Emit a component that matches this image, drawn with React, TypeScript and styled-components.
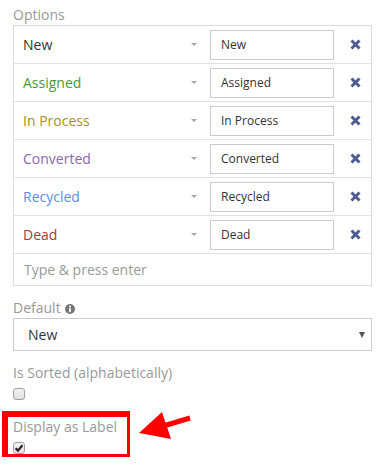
import React from "react";
import styled, { createGlobalStyle } from "styled-components";

const options = [
  { name: "New", color: "#333333" },
  { name: "Assigned", color: "#4a9a3a" },
  { name: "In Process", color: "#a8901c" },
  { name: "Converted", color: "#8a68b0" },
  { name: "Recycled", color: "#5f8ee0" },
  { name: "Dead", color: "#a83838" },
];

export default function App() {
  return (
    <Page>
      <GlobalStyle />

      <Label>Options</Label>
      <OptionsBox>
        {options.map((o) => (
          <OptionRow key={o.name}>
            <StyleSelect $color={o.color}>
              <span>{o.name}</span>
              <SmallCaret />
            </StyleSelect>
            <TextInput defaultValue={o.name} />
            <RemoveButton aria-label="remove">
              <svg width="11" height="11" viewBox="0 0 11 11">
                <path
                  d="M1.5 1.5 L9.5 9.5 M9.5 1.5 L1.5 9.5"
                  stroke="#4e5c92"
                  strokeWidth="3"
                  fill="none"
                />
              </svg>
            </RemoveButton>
          </OptionRow>
        ))}
        <NewOptionInput placeholder="Type & press enter" />
      </OptionsBox>

      <Field>
        <Label>
          Default
          <InfoIcon width="10" height="10" viewBox="0 0 10 10">
            <circle cx="5" cy="5" r="5" fill="#777" />
            <circle cx="5" cy="2.6" r="1" fill="#fff" />
            <rect x="4.1" y="4.1" width="1.8" height="4" fill="#fff" />
          </InfoIcon>
        </Label>
        <DefaultSelect>
          <span>New</span>
          <BigCaret />
        </DefaultSelect>
      </Field>

      <Field>
        <Label>Is Sorted (alphabetically)</Label>
        <CheckBox />
      </Field>

      <Highlight>
        <Label>Display as Label</Label>
        <CheckBox $checked>
          <svg width="10" height="10" viewBox="0 0 10 10">
            <path d="M1.6 5.2 L4 7.6 L8.4 2.2" stroke="#222" strokeWidth="2.2" fill="none" />
          </svg>
        </CheckBox>
      </Highlight>

      <Arrow width="60" height="36" viewBox="0 0 60 36">
        <path d="M25 19 L55 10" stroke="#ff0000" strokeWidth="5" />
        <polygon points="4,25 27,4 36,31" fill="#ff0000" />
      </Arrow>
    </Page>
  );
}

const GlobalStyle = createGlobalStyle`
  body {
    margin: 0;
    background: #fff;
    font-family: "Open Sans", "Liberation Sans", sans-serif;
  }
`;

const Page = styled.div`
  position: relative;
  width: 382px;
  height: 472px;
  box-sizing: border-box;
  padding: 5px 10px 0 13px;
`;

const Label = styled.div`
  display: flex;
  align-items: center;
  font-size: 14px;
  line-height: 20px;
  color: #999;
`;

const InfoIcon = styled.svg`
  margin-left: 4px;
  margin-top: 1px;
`;

const OptionsBox = styled.div`
  width: 359px;
  box-sizing: border-box;
  border: 1px solid #dcdcdc;
`;

const OptionRow = styled.div`
  display: flex;
  align-items: center;
  height: 38px;
  box-sizing: border-box;
  border-bottom: 1px solid #e3e3e3;
  padding-left: 9px;
`;

const StyleSelect = styled.div<{ $color: string }>`
  flex: 1;
  display: flex;
  align-items: center;
  justify-content: space-between;
  padding-right: 13px;
  font-size: 14px;
  color: ${(p) => p.$color};
`;

const SmallCaret = styled.span`
  width: 0;
  height: 0;
  border-left: 3px solid transparent;
  border-right: 3px solid transparent;
  border-top: 3px solid #a8a8a8;
`;

const TextInput = styled.input`
  width: 124px;
  height: 30px;
  box-sizing: border-box;
  border: 1px solid #ccc;
  padding: 0 10px;
  font-family: inherit;
  font-size: 12px;
  color: #333;
  outline: none;
`;

const RemoveButton = styled.span`
  width: 37px;
  box-sizing: border-box;
  display: flex;
  justify-content: center;
  padding-left: 6px;
`;

const NewOptionInput = styled.input`
  display: block;
  width: 100%;
  height: 31px;
  box-sizing: border-box;
  border: none;
  padding: 0 10px;
  font-family: inherit;
  font-size: 14px;
  outline: none;

  &::placeholder {
    color: #9a9a9a;
  }
`;

const Field = styled.div`
  margin-top: 12px;
`;

const DefaultSelect = styled.div`
  width: 359px;
  height: 33px;
  box-sizing: border-box;
  border: 1px solid #ccc;
  display: flex;
  align-items: center;
  justify-content: space-between;
  padding: 0 6px 0 14px;
  font-size: 14px;
  color: #333;
`;

const BigCaret = styled.span`
  width: 0;
  height: 0;
  border-left: 3.5px solid transparent;
  border-right: 3.5px solid transparent;
  border-top: 6px solid #555;
`;

const CheckBox = styled.span<{ $checked?: boolean }>`
  display: flex;
  align-items: center;
  justify-content: center;
  width: 12px;
  height: 12px;
  box-sizing: border-box;
  margin-top: 5px;
  border: 1px solid #a2a2a2;
  border-radius: 3px;
  background: linear-gradient(#f2f2f2, #e0e0e0);
`;

const Highlight = styled.div`
  width: 128px;
  box-sizing: border-box;
  margin: 11px 0 0 -11px;
  padding: 0 0 0 5px;
  border-style: solid;
  border-color: #ff0000;
  border-width: 6px 3px 3px 6px;
`;

const Arrow = styled.svg`
  position: absolute;
  left: 135px;
  top: 408px;
`;
